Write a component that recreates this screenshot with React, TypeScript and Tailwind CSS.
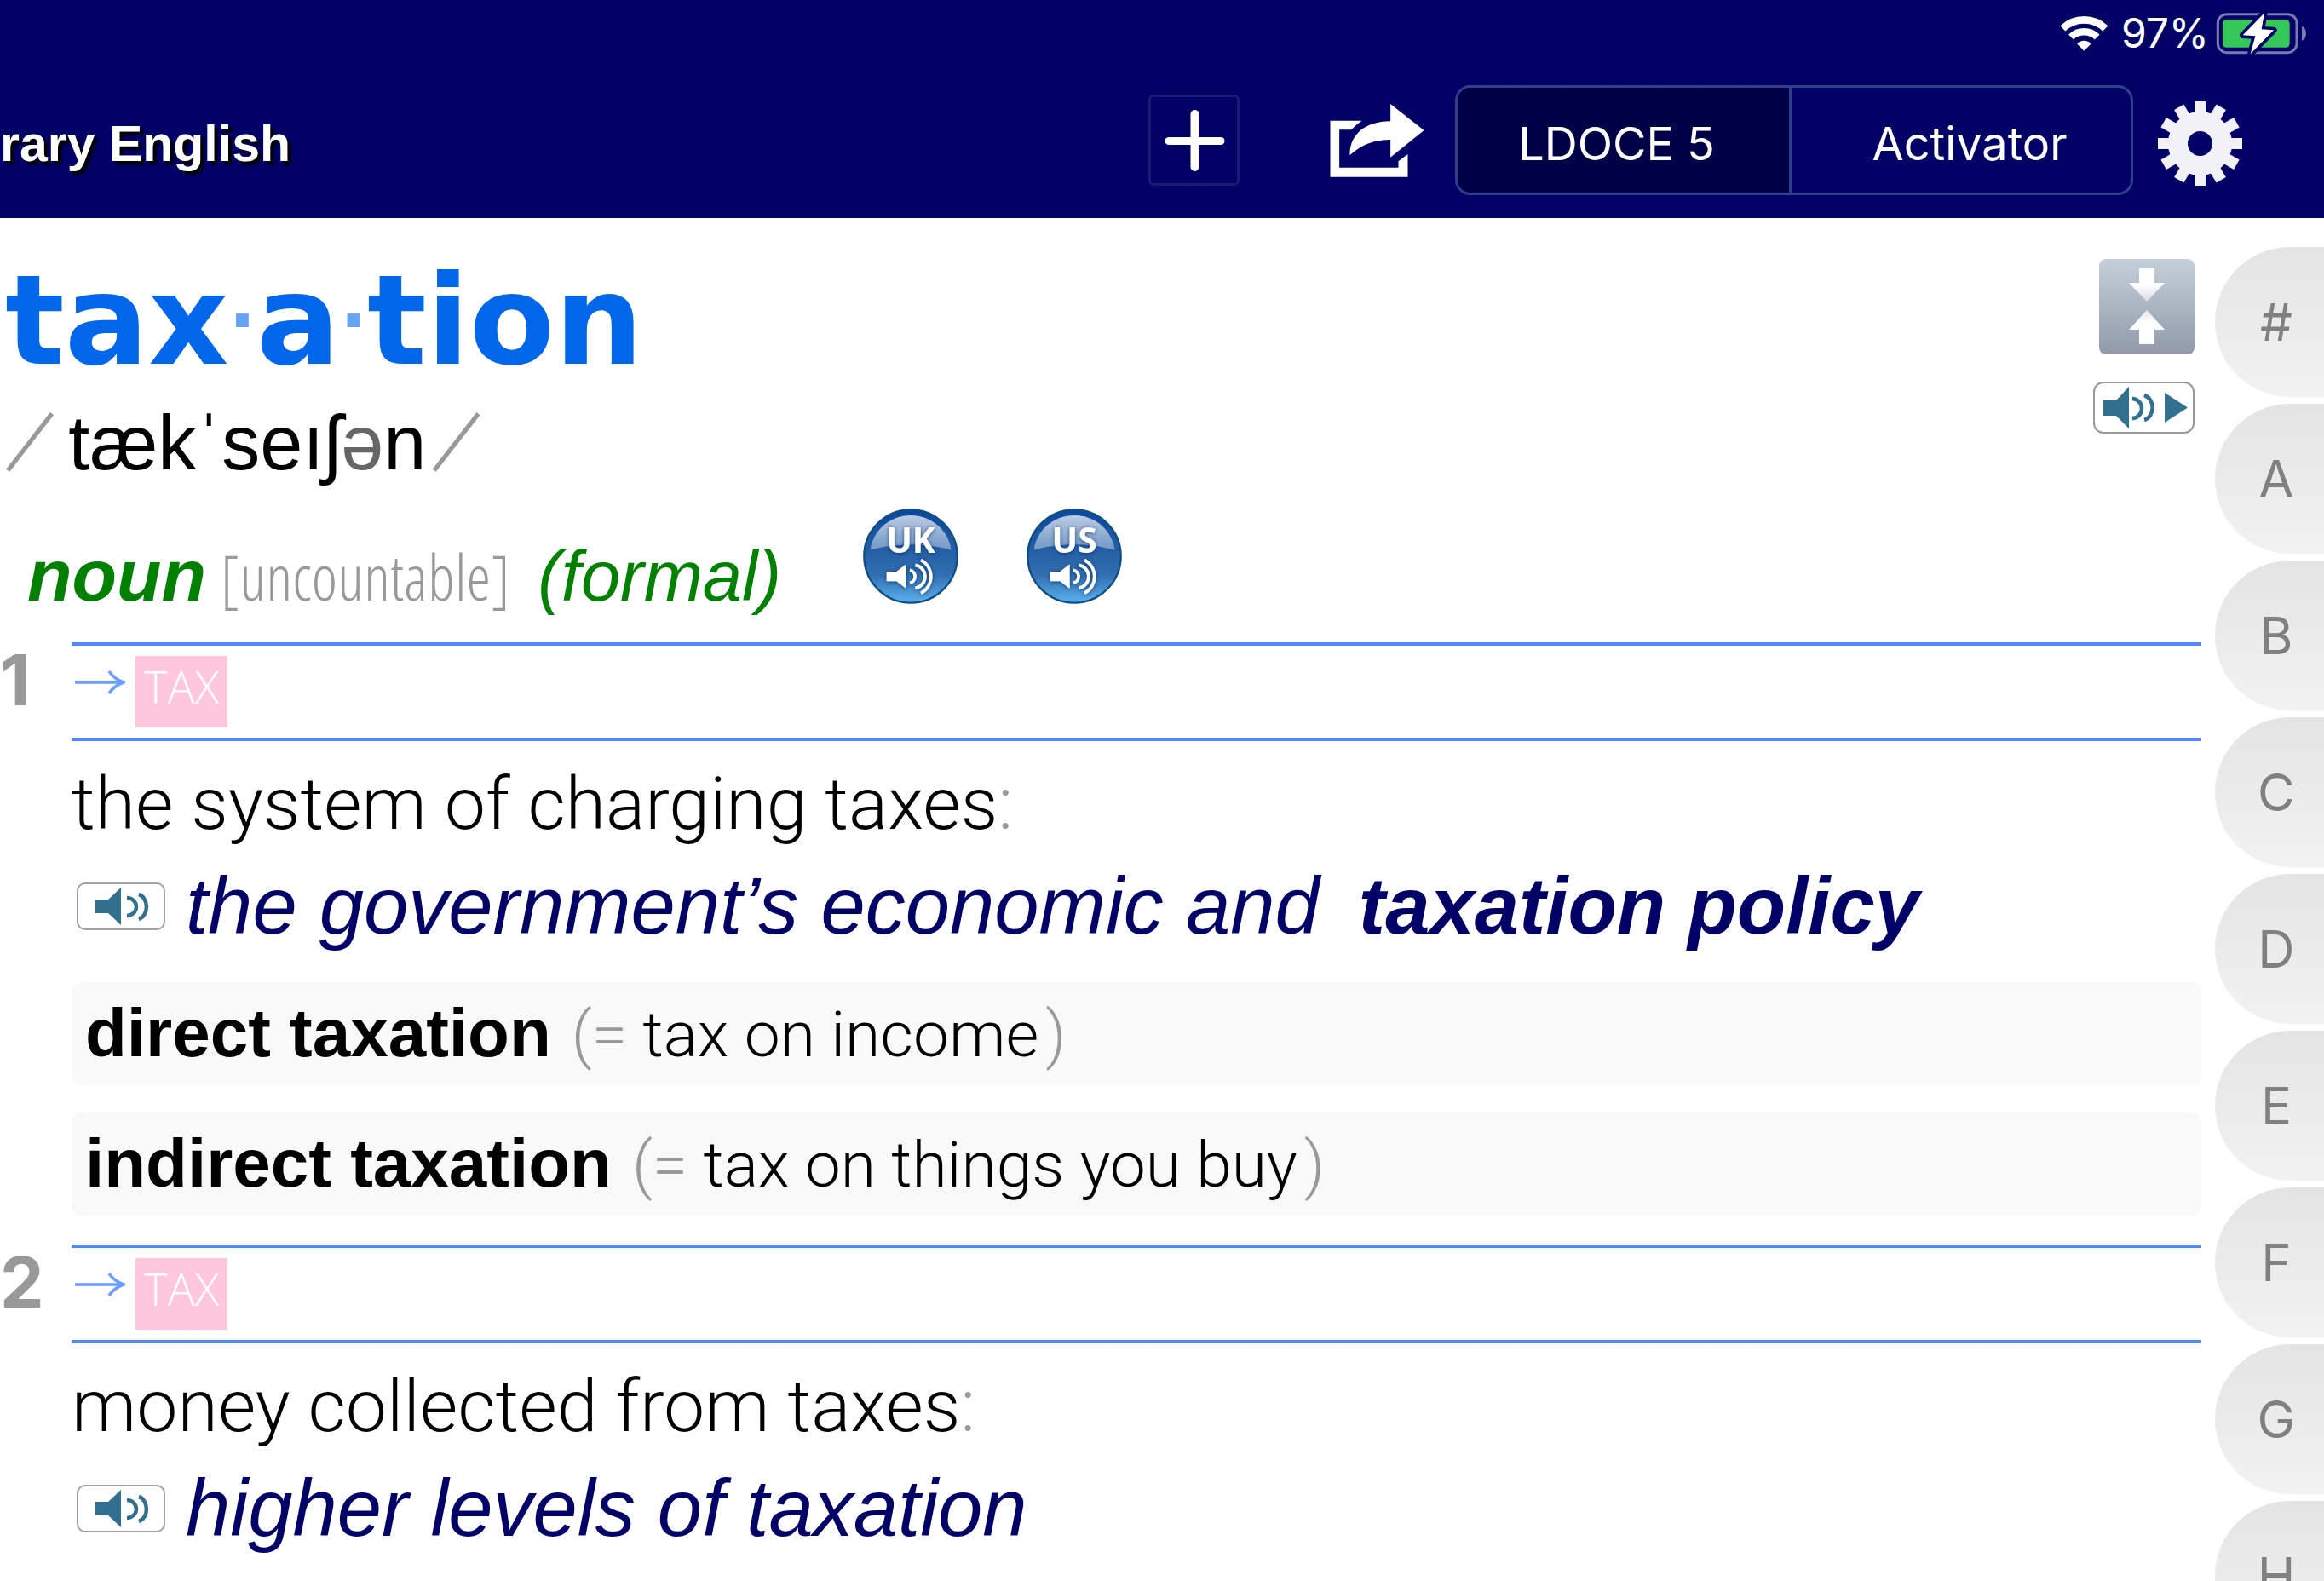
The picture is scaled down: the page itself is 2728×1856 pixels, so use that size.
import React from "react";

const HELV = "font-['Liberation_Sans',Arial,sans-serif]";
const LIGHT = "font-['Roboto','Liberation_Sans',sans-serif] font-light";
const UI = "font-['Inter','Liberation_Sans',sans-serif]";

function WifiIcon() {
  return (
    <svg className="h-[41px] w-[56px]" viewBox="46 57 168 123" fill="none" stroke="#fff" aria-label="Wi-Fi">
      <path d="M56 100.300A108 108 0 0 1 206 100.300" strokeWidth="26" />
      <path d="M85 130.500A66 66 0 0 1 177 130.500" strokeWidth="25" />
      <path d="M131 179L106 154A35 35 0 0 1 156 154Z" fill="#fff" stroke="none" />
    </svg>
  );
}

function BatteryIcon() {
  return (
    <svg className="h-[50px] w-[107px]" viewBox="603 42 321 150" aria-label="Charging">
      <rect x="610" y="50" width="278" height="135" rx="32" fill="none" stroke="#7a7ab3" strokeWidth="9" />
      <path d="M906 92Q921 98 921 117.500T906 143Z" fill="#7a7ab3" />
      <rect x="627" y="70" width="236" height="97" rx="13" fill="#34c759" />
      <path
        d="M774 46L698 124L742 127L725 190L807 106L764 103Z"
        fill="#fff"
        stroke="#000066"
        strokeWidth="22"
        strokeLinejoin="round"
        paintOrder="stroke"
      />
    </svg>
  );
}

function PlusIcon() {
  return (
    <svg className="size-[74px]" viewBox="0 0 74 74" stroke="#fff" strokeLinecap="round" aria-hidden="true">
      <path d="M37.500 6V68" strokeWidth="10" />
      <path d="M7 37.500H68" strokeWidth="9" />
    </svg>
  );
}

function ShareIcon() {
  return (
    <svg className="h-[86px] w-[111px]" viewBox="663 95 332 258" fill="#fff" aria-hidden="true">
      <path d="M664 154H775Q755 168 738 186H696V319H904V297L937 272V352H664Z" />
      <path d="M876 95L994 188L876 283V221Q790 221 733 276C731 205 785 156 876 156Z" />
    </svg>
  );
}

function GearIcon() {
  const teeth = [0, 30, 60, 90, 120, 150, 180, 210, 240, 270, 300, 330];
  return (
    <svg className="size-[99px]" viewBox="-49.500 -49.500 99 99" fill="#f2f1f7" aria-hidden="true">
      <circle r="26" fill="none" stroke="#f2f1f7" strokeWidth="23" />
      {teeth.map((a) => (
        <rect key={a} x="-6.500" y="-49.500" width="13" height="15" transform={`rotate(${a})`} />
      ))}
    </svg>
  );
}

function CollapseIcon() {
  return (
    <svg className="h-[92px] w-[44px]" viewBox="0 0 44 92" aria-hidden="true">
      <defs>
        <linearGradient id="down" x1="0" y1="0" x2="0" y2="1">
          <stop offset="0.500" stopColor="#fff" />
          <stop offset="1" stopColor="#d5dae0" />
        </linearGradient>
        <linearGradient id="up" x1="0" y1="0" x2="0" y2="1">
          <stop offset="0" stopColor="#e4e8ec" />
          <stop offset="0.400" stopColor="#fff" />
        </linearGradient>
      </defs>
      <path d="M13 1H31V18H43L22 40L1 18H13Z" fill="url(#down)" />
      <path d="M22 50L43 73H31V90H13V73H1Z" fill="url(#up)" />
    </svg>
  );
}

function PlayAllIcon() {
  return (
    <svg className="h-[57px] w-[115px]" viewBox="2 2 115 57" aria-hidden="true">
      <path d="M12 22H27L42 6V55L27 40H12Z M84 13L111 30.500L84 48Z" fill="#33708f" />
      <path d="M46 20A11 11.500 0 0 1 46 43M60 16A13 15 0 0 1 60 45" fill="none" stroke="#33708f" strokeWidth="4.500" />
    </svg>
  );
}

function AudioButton() {
  return (
    <button
      aria-label="Play example"
      className="ml-1.5 flex h-14 w-[104px] shrink-0 items-center justify-center rounded-[10px] border-2 border-[#a3a3a3] bg-white"
    >
      <svg className="h-[52px] w-[99px]" viewBox="2 2 99 52" aria-hidden="true">
        <path d="M21 20H36L51 6V50L36 36H21Z" fill="#33708f" />
        <path d="M58 18A11 10.500 0 0 1 58 39M72 14A12 15 0 0 1 72 43" fill="none" stroke="#33708f" strokeWidth="4.500" />
      </svg>
    </button>
  );
}

function AccentButton({ label }: { label: string }) {
  const id = `ball-${label}`;
  return (
    <button aria-label={`${label} pronunciation`} className="size-28 shrink-0">
      <svg className="size-28" viewBox="0 0 336 336">
        <defs>
          <linearGradient id={id} x1="0" y1="0" x2="0" y2="1">
            <stop offset="0" stopColor="#0c479c" />
            <stop offset="0.450" stopColor="#2560a6" />
            <stop offset="0.700" stopColor="#316fb0" />
            <stop offset="1" stopColor="#5cb0ee" />
          </linearGradient>
          <linearGradient id={`${id}-gloss`} x1="0" y1="0" x2="0" y2="1">
            <stop offset="0" stopColor="#fff" stopOpacity="0.720" />
            <stop offset="1" stopColor="#fff" stopOpacity="0.360" />
          </linearGradient>
          <filter id={`${id}-shadow`} x="-20%" y="-20%" width="140%" height="140%">
            <feDropShadow dx="0" dy="2" stdDeviation="6" floodColor="#07285c" floodOpacity="0.800" />
          </filter>
        </defs>
        <circle cx="168" cy="168" r="164" fill={`url(#${id})`} stroke="#0d4f85" strokeWidth="7" />
        <path d="M26 146C36 75 95 24 168 24S300 75 311 146C220 120 110 120 26 146Z" fill={`url(#${id}-gloss)`} />
        <g filter={`url(#${id}-shadow)`} fill="#fff">
          <text
            x="168"
            y="157"
            textAnchor="middle"
            fontSize="122"
            fontWeight="700"
            fontFamily="'Open Sans', 'Noto Sans', sans-serif"
          >
            {label}
          </text>
          <path d="M83 222H118L152 196V282L118 256H83Z" />
          <path
            d="M165 217A23 23 0 0 1 165 262M184 199A41 41 0 0 1 184 280M204 181A66 66 0 0 1 204 298"
            fill="none"
            stroke="#fff"
            strokeWidth="11"
          />
        </g>
      </svg>
    </button>
  );
}

function CrossRef() {
  return (
    <div className="flex items-start border-y-4 border-[#5288fa] py-3">
      <svg className="ml-1 mt-[15px] h-8 w-[59px]" viewBox="0 0 59 32" fill="none" stroke="#6c9dff" strokeWidth="3.500" aria-hidden="true">
        <path d="M0 16H56M40 3Q46 12 57 16Q46 20 40 29" />
      </svg>
      <a
        href="#tax"
        className="ml-3 h-[84px] bg-[#ffc7dc] px-2.5 font-['Open_Sans','Noto_Sans',sans-serif] text-[53px] font-light leading-[72px] text-white"
      >
        TAX
      </a>
    </div>
  );
}

function Sense({ n, text, children }: { n: number; text: string; children: React.ReactNode }) {
  return (
    <section className="flex">
      <span className={`${UI} w-21 shrink-0 text-[82px] font-bold leading-[90px] text-[#999]`}>{n}</span>
      <div className="min-w-0 flex-1">
        <CrossRef />
        <p className={`${LIGHT} whitespace-nowrap text-[86px] leading-[148px] text-black`}>
          {text}
          <span className="text-[#999]">:</span>
        </p>
        {children}
      </div>
    </section>
  );
}

function Example({ children }: { children: React.ReactNode }) {
  return (
    <div className="flex items-center gap-6">
      <AudioButton />
      <p className={`${HELV} whitespace-nowrap text-[94px] italic leading-[92px] text-[#000066]`}>{children}</p>
    </div>
  );
}

function Collocation({ term, gloss }: { term: string; gloss: string }) {
  return (
    <p className={`${HELV} whitespace-nowrap rounded-xl bg-[#f9f9f9] px-4 text-[80px] leading-[120px] text-black`}>
      <b>{term}</b>
      <span className={`${LIGHT} text-[75px]`}>
        <span className="ml-6 text-[#999]">(= </span>
        {gloss}
        <span className="ml-2 text-[#999]">)</span>
      </span>
    </p>
  );
}

export default function App() {
  return (
    <div className="flex h-screen flex-col overflow-hidden bg-white">
      <header className={`${UI} shrink-0 bg-[#000066] pb-[27px] text-white`}>
        <div className="flex h-[100px] items-start justify-end gap-2 pr-5 pt-3.5">
          <div className="flex h-[50px] items-center gap-4">
            <WifiIcon />
            <span className="text-[48px] leading-[50px]">97%</span>
          </div>
          <BatteryIcon />
        </div>
        <div className="flex h-[129px] items-center">
          <h1 className={`${HELV} pt-2 text-[59px] font-bold leading-[72px] [text-shadow:4px_4px_3px_#000]`}>rary English</h1>
          <button
            aria-label="Add"
            className="ml-auto flex h-[107px] w-[107px] items-center justify-center rounded-md border-3 border-[#1a1a75]"
          >
            <PlusIcon />
          </button>
          <button aria-label="Share" className="ml-[106px]">
            <ShareIcon />
          </button>
          <div className="ml-9 flex h-[129px] rounded-[18px] border-3 border-[#2f3f8c] text-[54px]">
            <button aria-pressed="true" className="w-[392px] rounded-l-[15px] border-r-3 border-[#2f3f8c] bg-[#000047] pr-4 pt-2">
              LDOCE 5
            </button>
            <button aria-pressed="false" className="w-[398px] pl-5 pt-2">
              Activator
            </button>
          </div>
          <button aria-label="Settings" className="ml-[29px] mr-24 pt-2">
            <GearIcon />
          </button>
        </div>
      </header>

      <div className="flex min-h-0 flex-1">
        <main className="min-w-0 flex-1 pr-4 pt-11">
          <div className="flex h-[272px] justify-between pr-2">
            <div>
              <h2 className="flex h-[168px] items-start pl-1.5 font-['DejaVu_Sans',Verdana,sans-serif] text-[146px] font-bold leading-[152px] text-[#0066ea]">
                tax<span className="text-[84px] text-[#66a3f2]">·</span>a
                <span className="text-[84px] text-[#66a3f2]">·</span>tion
              </h2>
              <p className={`${HELV} flex items-center pl-2 text-[90px] leading-[104px] text-black`}>
                <span className={`${LIGHT} mr-5 text-[120px] italic text-[#999]`}>⁄</span>
                <span>
                  tækˈseıʃ<span className="text-[#666]">ə</span>n
                </span>
                <span className={`${LIGHT} ml-2 text-[120px] italic text-[#999]`}>⁄</span>
              </p>
            </div>
            <div className="flex flex-col items-end gap-8 pt-1">
              <button
                aria-label="Collapse"
                className="flex size-28 items-center justify-center rounded-lg bg-linear-to-b from-[#c5d0da] to-[#929aa9]"
              >
                <CollapseIcon />
              </button>
              <button aria-label="Play all" className="rounded-xl border-2 border-[#999] bg-white">
                <PlayAllIcon />
              </button>
            </div>
          </div>

          <div className="mt-[25px] flex h-[131px] items-start pl-8">
            <p className={`${HELV} mt-[22px] flex items-baseline whitespace-nowrap text-[83px] leading-[112px] italic text-[#008000]`}>
              <b className="text-[86px]">noun</b>
              <span className="ml-4 font-['Open_Sans_Condensed_Light','Open_Sans',sans-serif] text-[73px] font-light not-italic text-[#999]">
                [uncountable]
              </span>
              <span className="ml-8">(formal)</span>
            </p>
            <div className="ml-24 flex gap-20">
              <AccentButton label="UK" />
              <AccentButton label="US" />
            </div>
          </div>

          <div className="mt-[26px] flex flex-col gap-[34px]">
            <Sense n={1} text="the system of charging taxes">
              <Example>
                the government’s economic and <b className="ml-5">taxation policy</b>
              </Example>
              <div className="mt-[43px] flex flex-col gap-8">
                <Collocation term="direct taxation" gloss="tax on income" />
                <Collocation term="indirect taxation" gloss="tax on things you buy" />
              </div>
            </Sense>
            <Sense n={2} text="money collected from taxes">
              <Example>higher levels of taxation</Example>
            </Sense>
          </div>
        </main>

        <nav aria-label="Alphabet" className={`${UI} flex w-32 shrink-0 flex-col gap-2 overflow-hidden pt-[34px]`}>
          {["#", "A", "B", "C", "D", "E", "F", "G", "H"].map((c) => (
            <button
              key={c}
              className="h-44 w-full shrink-0 rounded-l-[88px] bg-linear-to-b from-[#e4e4e4] to-[#f2f2f2] pl-4 text-[60px] text-[#808080]"
            >
              {c}
            </button>
          ))}
        </nav>
      </div>
    </div>
  );
}
